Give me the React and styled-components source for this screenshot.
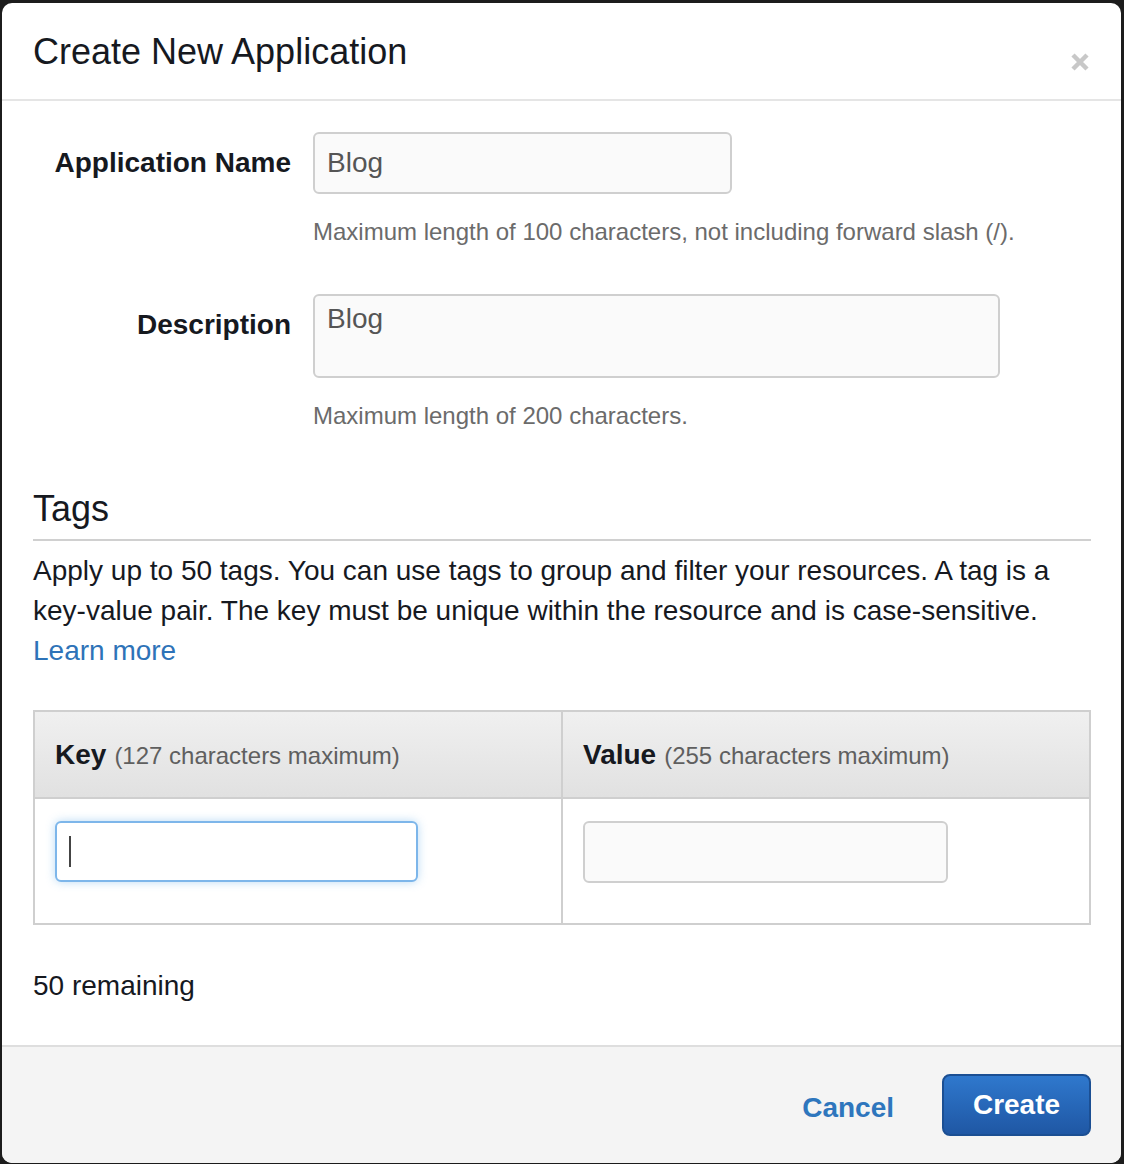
import React from "react";
import styled, {createGlobalStyle} from "styled-components";

const GlobalStyle = createGlobalStyle`
    html, body {
        margin: 0;
        padding: 0;
        background: #1c1c1c;
    }

    body {
        font-family: "Liberation Sans", Arial, Helvetica, sans-serif;
        color: #16191f;
    }

    * {
        box-sizing: border-box;
    }
`;

const Backdrop = styled.div`
    padding: 3px 3px 1px 2px;
`;

const Modal = styled.div`
    display: flex;
    flex-direction: column;

    height: 1160px;

    border-radius: 10px;
    overflow: hidden;

    background: #fff;
`;

const Header = styled.div`
    display: flex;
    justify-content: space-between;
    align-items: flex-start;

    height: 98px;
    padding: 27px 31px 0 31px;

    border-bottom: 2px solid #e5e5e5;
`;

const Title = styled.h1`
    margin: 0;

    font-size: 36px;
    font-weight: 400;
    line-height: 44px;
    color: #16191f;
`;

const CloseButton = styled.button`
    display: flex;

    margin-top: 22px;
    padding: 0;

    border: 0;
    background: none;
    cursor: pointer;
`;

const Body = styled.div`
    flex: 1;

    padding: 31px 30px 0 31px;
`;

const FormRow = styled.div`
    display: grid;
    grid-template-columns: 258px auto;
    column-gap: 22px;

    margin-bottom: ${({spaced}) => (spaced ? "45px" : "0")};
`;

const Label = styled.label`
    padding-top: 11px;

    font-size: 28px;
    font-weight: 700;
    line-height: 40px;
    text-align: right;
    color: #16191f;
`;

const Field = styled.div`
    display: flex;
    flex-direction: column;
    align-items: flex-start;
`;

const TextInput = styled.input`
    width: ${({width}) => width}px;
    height: 62px;
    padding: 0 12px;

    border: 2px solid #cfcfcf;
    border-radius: 6px;
    background: #fafafa;

    font-family: inherit;
    font-size: 28px;
    color: #555;

    outline: none;
`;

const TextArea = styled.textarea`
    width: 687px;
    height: 84px;
    padding: 5px 12px;

    border: 2px solid #cfcfcf;
    border-radius: 6px;
    background: #fafafa;

    font-family: inherit;
    font-size: 28px;
    line-height: 36px;
    color: #555;

    resize: none;
    outline: none;
`;

const Help = styled.div`
    margin-top: 21px;

    font-size: 24px;
    line-height: 34px;
    color: #6b6b6b;
`;

const SectionTitle = styled.h2`
    margin: 54px 0 0 0;
    padding-bottom: 8px;

    border-bottom: 2px solid #d0d0d0;

    font-size: 36px;
    font-weight: 400;
    line-height: 44px;
    color: #16191f;
`;

const Paragraph = styled.p`
    margin: 10px 0 0 0;

    font-size: 28px;
    line-height: 40px;
    color: #16191f;
`;

const Link = styled.a`
    color: #2e73b8;
    text-decoration: none;
`;

const TagTable = styled.div`
    display: grid;
    grid-template-columns: 526px 1fr;

    margin-top: 39px;

    border: 2px solid #cfcfcf;
`;

const HeadCell = styled.div`
    display: flex;
    align-items: baseline;
    gap: 8px;

    height: 87px;
    padding: 0 20px;
    line-height: 86px;

    border-bottom: 2px solid #cfcfcf;
    border-left: ${({divided}) => (divided ? "2px solid #cfcfcf" : "0")};
    background: linear-gradient(#f0f0f0, #e1e1e1);
`;

const HeadName = styled.span`
    font-size: 28px;
    font-weight: 700;
    color: #16191f;
`;

const HeadHint = styled.span`
    font-size: 24px;
    color: #5f5f5f;
`;

const BodyCell = styled.div`
    height: 124px;
    padding: 22px 20px 0 20px;

    border-left: ${({divided}) => (divided ? "2px solid #cfcfcf" : "0")};
`;

const FocusedInput = styled.div`
    display: flex;
    align-items: center;

    width: 363px;
    height: 61px;
    padding-left: 12px;

    border: 2px solid #7db6ea;
    border-radius: 6px;
    background: #fff;
    box-shadow: 0 0 10px rgba(102, 175, 233, 0.45);
`;

const Caret = styled.span`
    width: 2px;
    height: 31px;

    background: #444;
`;

const Remaining = styled.div`
    margin-top: 41px;

    font-size: 28px;
    line-height: 40px;
    color: #16191f;
`;

const Footer = styled.div`
    display: flex;
    justify-content: flex-end;
    align-items: center;
    gap: 48px;

    height: 118px;
    padding: 0 30px 0 0;

    border-top: 2px solid #dedede;
    background: #f4f4f4;
`;

const CancelButton = styled.button`
    margin-top: 6px;
    padding: 0;

    border: 0;
    background: none;

    font-family: inherit;
    font-size: 28px;
    font-weight: 700;
    color: #2e76bd;
    cursor: pointer;
`;

const PrimaryButton = styled.button`
    width: 149px;
    height: 62px;

    border: 2px solid #1b4f93;
    border-radius: 8px;
    background: linear-gradient(#2f78cd, #1f57a4);

    font-family: inherit;
    font-size: 28px;
    font-weight: 700;
    color: #fff;
    cursor: pointer;
`;

function CloseIcon() {
    return (
        <svg width="20" height="20" viewBox="0 0 20 20">
            <path d="M3 3 L17 17 M17 3 L3 17" stroke="#c8c8c8" strokeWidth="4.5" strokeLinecap="butt"/>
        </svg>
    );
}

function TagColumnHead({name, hint, divided = false}) {
    return (
        <HeadCell divided={divided}>
            <HeadName>{name}</HeadName>
            <HeadHint>{hint}</HeadHint>
        </HeadCell>
    );
}

export default function App() {
    return (
        <Backdrop>
            <GlobalStyle/>
            <Modal>
                <Header>
                    <Title>Create New Application</Title>
                    <CloseButton aria-label="Close"><CloseIcon/></CloseButton>
                </Header>
                <Body>
                    <FormRow spaced>
                        <Label>Application Name</Label>
                        <Field>
                            <TextInput width={419} defaultValue="Blog" readOnly/>
                            <Help>Maximum length of 100 characters, not including forward slash (/).</Help>
                        </Field>
                    </FormRow>
                    <FormRow>
                        <Label>Description</Label>
                        <Field>
                            <TextArea defaultValue="Blog" readOnly/>
                            <Help>Maximum length of 200 characters.</Help>
                        </Field>
                    </FormRow>

                    <SectionTitle>Tags</SectionTitle>
                    <Paragraph>
                        Apply up to 50 tags. You can use tags to group and filter your resources. A tag is a
                        key-value pair. The key must be unique within the resource and is case-sensitive.
                        <br/>
                        <Link href="#">Learn more</Link>
                    </Paragraph>

                    <TagTable>
                        <TagColumnHead name="Key" hint="(127 characters maximum)"/>
                        <TagColumnHead name="Value" hint="(255 characters maximum)" divided/>
                        <BodyCell>
                            <FocusedInput><Caret/></FocusedInput>
                        </BodyCell>
                        <BodyCell divided>
                            <TextInput width={365} readOnly/>
                        </BodyCell>
                    </TagTable>

                    <Remaining>50 remaining</Remaining>
                </Body>
                <Footer>
                    <CancelButton>Cancel</CancelButton>
                    <PrimaryButton>Create</PrimaryButton>
                </Footer>
            </Modal>
        </Backdrop>
    );
}
